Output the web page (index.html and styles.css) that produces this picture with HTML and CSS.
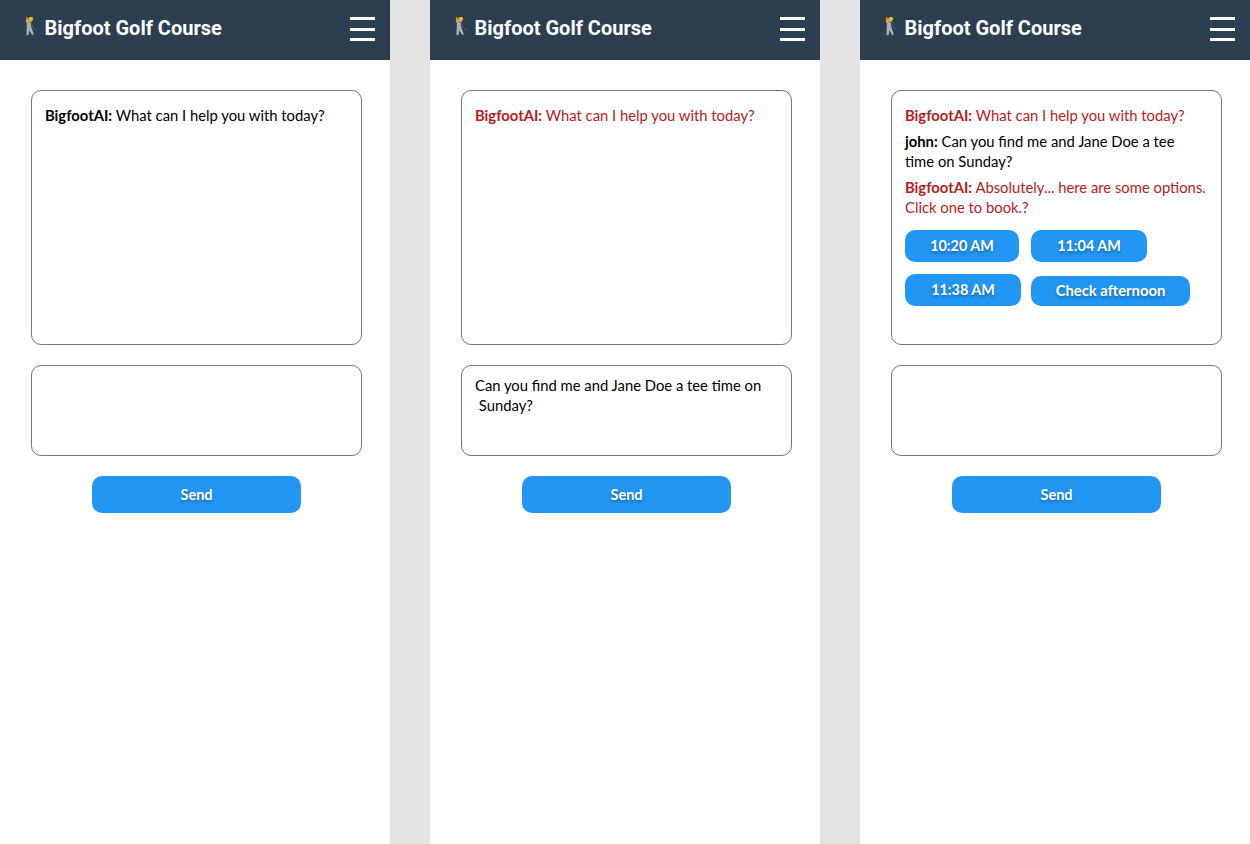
FILE: index.html
```html
<!DOCTYPE html>
<html lang="en">
<head>
  <meta charset="UTF-8">
  <title>Bigfoot Golf Course</title>
  <link rel="stylesheet" href="styles.css">
</head>
<body>
  <svg class="defs" width="0" height="0">
    <symbol id="golfer" viewBox="0 0 16 22">
      <path d="M3.5 1 5 4" stroke="#c9940f" stroke-width="1.6" fill="none"/>
      <rect x="3" y="3" width="3.4" height="4" rx="1" fill="#e0a91c"/>
      <rect x="6" y="0.8" width="4.6" height="4" rx="1.4" fill="#eeb91f"/>
      <rect x="6.8" y="4" width="2.4" height="2.4" fill="#d3a88a"/>
      <path d="M4.2 6.5h3.8l1 5.5 2.6 7.6-1.9.6L6.9 15 5.9 20.6H3.6L3.9 13z" fill="#a9afb2"/>
      <path d="M8.5 7 11 12l4 3.5" stroke="#858c90" stroke-width=".6" fill="none" opacity=".7"/>
      <rect x="3.4" y="20" width="2.8" height="1.8" fill="#45494c"/>
      <rect x="9.2" y="19.6" width="2.8" height="1.8" fill="#45494c"/>
    </symbol>
  </svg>

  <div class="screens">
    <!-- Empty chat -->
    <section class="phone">
      <header class="topbar">
        <h1 class="brand"><svg class="golfer"><use href="#golfer"/></svg>Bigfoot Golf Course</h1>
        <div class="burger"><span></span><span></span><span></span></div>
      </header>
      <div class="chat">
        <div class="log">
          <p class="msg"><b>BigfootAI:</b> What can I help you with today?</p>
        </div>
        <div class="entry"></div>
        <button class="send">Send</button>
      </div>
    </section>

    <!-- Typing -->
    <section class="phone">
      <header class="topbar">
        <h1 class="brand"><svg class="golfer"><use href="#golfer"/></svg>Bigfoot Golf Course</h1>
        <div class="burger"><span></span><span></span><span></span></div>
      </header>
      <div class="chat">
        <div class="log">
          <p class="msg bot"><b>BigfootAI:</b> What can I help you with today?</p>
        </div>
        <div class="entry">Can you find me and Jane Doe a tee time on<br>&nbsp;Sunday?</div>
        <button class="send">Send</button>
      </div>
    </section>

    <!-- Options -->
    <section class="phone">
      <header class="topbar">
        <h1 class="brand"><svg class="golfer"><use href="#golfer"/></svg>Bigfoot Golf Course</h1>
        <div class="burger"><span></span><span></span><span></span></div>
      </header>
      <div class="chat">
        <div class="log">
          <p class="msg bot"><b>BigfootAI:</b> What can I help you with today?</p>
          <p class="msg"><b>john:</b> Can you find me and Jane Doe a tee<br>time on Sunday?</p>
          <p class="msg bot"><b>BigfootAI:</b> Absolutely... here are some options.<br>Click one to book.?</p>
          <div class="times">
            <button class="time w114">10:20 AM</button>
            <button class="time w116">11:04 AM</button>
            <button class="time w116">11:38 AM</button>
            <button class="time w159">Check afternoon</button>
          </div>
        </div>
        <div class="entry"></div>
        <button class="send">Send</button>
      </div>
    </section>
  </div>
</body>
</html>
```

FILE: styles.css
```css
html, body {
  margin: 0;
  padding: 0;
}
body {
  font-family: Lato, "Open Sans", sans-serif;
  background: #e4e4e4;
  color: #000;
}
.defs {
  position: absolute;
}
.screens {
  display: flex;
  gap: 40px;
  height: 844px;
  overflow: hidden;
}
.phone {
  width: 390px;
  background: #fff;
}
.topbar {
  box-sizing: border-box;
  height: 60px;
  background: #2d3e50;
  display: flex;
  align-items: center;
  justify-content: space-between;
  padding: 0 15px 4px 23px;
}
.brand {
  display: flex;
  align-items: center;
  margin: 0;
  font-family: Roboto, sans-serif;
  font-size: 20px;
  font-weight: 700;
  color: #fff;
}
.golfer {
  width: 15px;
  height: 21px;
  margin: -3px 6.5px 0 0;
}
.burger {
  display: flex;
  flex-direction: column;
  gap: 7.5px;
  width: 25px;
  margin-top: 2px;
}
.burger span {
  height: 3px;
  background: #fff;
}
.chat {
  display: flex;
  flex-direction: column;
  align-items: flex-start;
  padding: 30px 28px 0 31px;
}
.log, .entry {
  width: 331px;
  box-sizing: border-box;
  border: 1px solid #777;
  border-radius: 10px;
  font-size: 14.8px;
  line-height: 20px;
}
.log {
  height: 255px;
  margin-bottom: 20px;
  padding: 14px 8px 0 13px;
}
.entry {
  height: 91px;
  margin-bottom: 20px;
  padding: 9px 13px 0;
}
.msg {
  margin: 0 0 6px;
}
.bot {
  color: #b71c1c;
}
.send, .time {
  border: none;
  background: #2196f3;
  color: #fff;
  font-family: Lato, sans-serif;
  font-weight: 700;
  text-shadow: 0 2px 3px rgba(0, 0, 0, 0.3);
}
.send {
  width: 209px;
  height: 37px;
  border-radius: 10px;
  font-size: 14.5px;
  margin-left: 61px;
}
.times {
  display: grid;
  grid-template-columns: 126px auto;
  row-gap: 12px;
  justify-items: start;
  align-items: end;
  margin-top: 13px;
}
.time {
  height: 32px;
  border-radius: 10px;
  font-size: 14.4px;
  padding: 0 0 2px;
}
.w114 {
  width: 114px;
}
.w116 {
  width: 116px;
}
.w159 {
  width: 159px;
  height: 30px;
  font-size: 14.8px;
}
```
